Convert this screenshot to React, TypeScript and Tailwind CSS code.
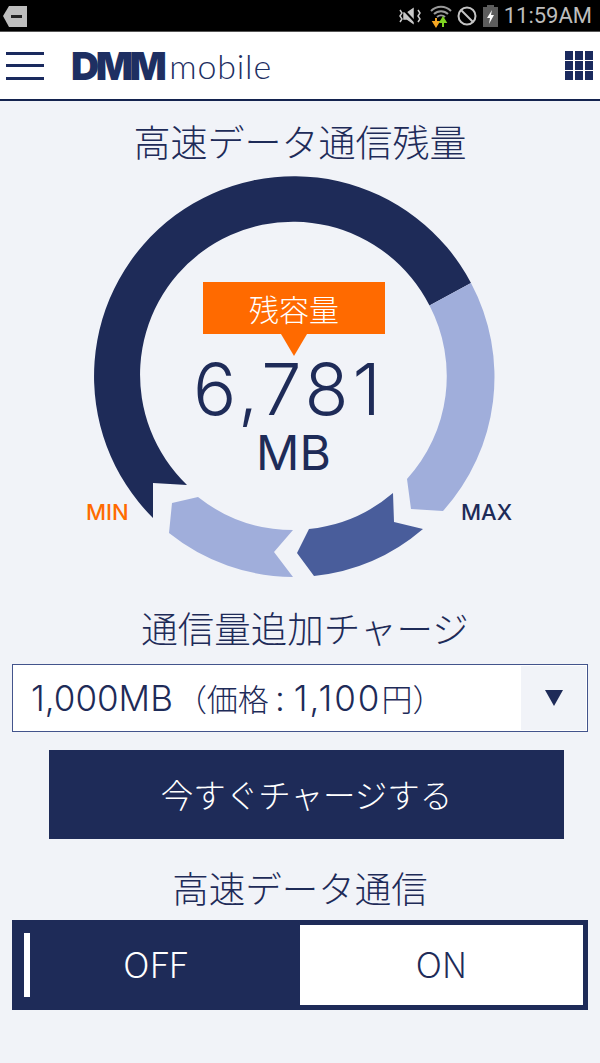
import React, { useState } from "react";

const jp = "font-['Noto_Sans_CJK_JP','Noto_Sans',sans-serif]";
const latin = "font-['Inter','Noto_Sans_CJK_JP',sans-serif]";

const StatusBar = () => (
  <div className="flex h-[32px] items-center justify-between border-b border-[#555] bg-black pl-[2px] pr-[8px]">
    <svg width="25" height="22" viewBox="0 0 25 22">
      <path d="M7 1H25V22H7L1 11Z" fill="#bdbdbd" />
      <rect x="9" y="10" width="11" height="3" fill="#222" />
    </svg>
    <div className="flex items-center">
      <svg width="24" height="18" viewBox="0 0 24 18" className="mr-[9px]" fill="none" stroke="#c9c9c9" strokeWidth="1.5">
        <path d="M7 6h3l6-4v14l-6-4H7z" fill="#c9c9c9" />
        <path d="M3 3l2 3-2 3 2 3-2 3M21 3l2 3-2 3 2 3-2 3" />
        <path d="M5 1l15 16" stroke="#000" strokeWidth="2" />
      </svg>
      <svg width="22" height="24" viewBox="0 0 22 24" className="mr-[5px]" fill="none">
        <path d="M1 7a14 14 0 0 1 20 0M4 10a10 10 0 0 1 14 0M7 13a6 6 0 0 1 8 0" stroke="#9a9a9a" strokeWidth="2" />
        <path d="M6 14v6M3.5 18l2.5 4 2.5-4z" stroke="#f5a623" strokeWidth="2" fill="#f5a623" />
        <path d="M13 23v-6M10.500 18l2.500-4 2.500 4z" stroke="#7ed321" strokeWidth="2" fill="#7ed321" />
      </svg>
      <svg width="20" height="20" viewBox="0 0 20 20" className="mr-[6px]" fill="none" stroke="#c4c4c4" strokeWidth="2">
        <circle cx="10" cy="10" r="8.500" />
        <path d="M4 4l12 12" />
      </svg>
      <svg width="15" height="22" viewBox="0 0 15 22" className="mr-[6px]">
        <path d="M4 0h7v2h4v20H0V2h4z" fill="#5c5c5c" />
        <path d="M9 5L4 13h3l-1 6 5-9H8z" fill="#fff" />
      </svg>
      <span className="font-['Roboto',sans-serif] text-[22px] leading-none text-[#bdbdbd]">11:59AM</span>
    </div>
  </div>
);

const Header = () => (
  <div className="flex h-[69px] items-center justify-between border-b-2 border-[#14234f] bg-white pl-[6px] pr-[7px]">
    <div className="flex items-center">
      <div className="flex h-[28px] w-[38px] flex-col justify-between">
        <div className="h-[3px] bg-[#1a2a5e]" />
        <div className="h-[3px] bg-[#1a2a5e]" />
        <div className="h-[3px] bg-[#1a2a5e]" />
      </div>
      <span className="ml-[27px] font-['Inter',sans-serif] text-[39px] leading-none font-black tracking-[-3.5px] text-[#1e2f62]">
        DMM
      </span>
      <span className="ml-[6px] pt-[1px] font-['Lato',sans-serif] text-[34px] leading-none font-light tracking-[0.8px] text-[#1e2f62]">
        mobile
      </span>
    </div>
    <div className="grid grid-cols-3 gap-[1.5px]">
      {Array.from({ length: 9 }).map((_, i) => (
        <div key={i} className="h-[8.500px] w-[8.500px] bg-[#1a2a5e]" />
      ))}
    </div>
  </div>
);

const Gauge = () => (
  <div className="relative mx-auto h-[420px] w-[600px]">
    <svg width="600" height="420" viewBox="0 165 600 420">
      <path
        d="M153 518 L153 483 L187 485 A153 153 0 1 1 429.500 305.500 L471 283 A200 200 0 1 0 153 518 Z"
        fill="#1e2b58"
      />
      <path
        d="M471 283 A200 200 0 0 1 443 511 L411 509 L407 479 A153 153 0 0 0 429.500 305.500 Z"
        fill="#a0aedb"
      />
      <path
        d="M393 493 L394 522 L423 529 A200 200 0 0 1 314 576 L297 553 L309 529 A153 153 0 0 0 393 493 Z"
        fill="#495d9b"
      />
      <path
        d="M198 497 L172 503 L169 533 A200 200 0 0 0 293 577 L274 552 L293 530 A153 153 0 0 1 198 497 Z"
        fill="#a0aedb"
      />
    </svg>
    <div className="absolute top-[117px] left-[203px] flex h-[52px] w-[182px] items-center justify-center bg-[#ff6a00]">
      <span className={`${jp} text-[30px] leading-none font-light text-white`}>残容量</span>
      <div className="absolute top-[52px] left-[78px] h-0 w-0 border-x-[13px] border-t-[22px] border-x-transparent border-t-[#ff6a00]" />
    </div>
    <div className="absolute top-[187px] left-0 w-[578px] text-center font-['Inter',sans-serif] text-[72px] leading-[74px] font-light tracking-[4px] text-[#1e2b58]">
      6,781
    </div>
    <div className="absolute top-[263px] left-0 w-[587px] text-center font-['Inter',sans-serif] text-[48px] leading-[50px] font-normal text-[#1e2b58]">
      MB
    </div>
    <span className="absolute top-[334px] left-[86px] font-['Inter',sans-serif] text-[22px] leading-[26px] font-medium text-[#ff6a00]">
      MIN
    </span>
    <span className="absolute top-[334px] left-[461px] font-['Inter',sans-serif] text-[22px] leading-[26px] font-medium text-[#1e2b58]">
      MAX
    </span>
  </div>
);

const App = () => {
  const [on, setOn] = useState(false);

  return (
    <div className="h-[1063px] w-[600px] overflow-hidden bg-[#f1f3f8]">
      <StatusBar />
      <Header />
      <h1 className={`${jp} mt-[18px] h-[46px] text-center text-[37px] leading-[44px] font-light text-[#1e2b58]`}>
        高速データ通信残量
      </h1>
      <Gauge />
      <h2 className={`${jp} mt-[21px] h-[44px] pl-[10px] text-center text-[36.500px] leading-[44px] font-light text-[#1e2b58]`}>
        通信量追加チャージ
      </h2>
      <div className="mx-[12px] mt-[14px] flex h-[68px] items-stretch border border-[#43548c] bg-white p-[1px]">
        <div className={`${latin} flex flex-1 items-center pl-[17px] text-[35px] font-light whitespace-nowrap text-[#1e2b58]`}>
          1,000MB
          <span className={`${jp} ml-[3px] text-[31px]`}>（価格</span>
          <span className="mr-[9px] ml-[6px]">:</span>
          <span className="tracking-[2px]">1,100</span>
          <span className={`${jp} text-[31px]`}>円）</span>
        </div>
        <div className="flex w-[65px] items-center justify-center bg-[#f1f3f8]">
          <div className="h-0 w-0 border-x-[9px] border-t-[16px] border-x-transparent border-t-[#1e2b58]" />
        </div>
      </div>
      <button
        type="button"
        className={`${jp} mx-[49px] mt-[18px] block h-[89px] w-[515px] bg-[#1e2b58] text-[32.500px] font-light text-white`}
      >
        今すぐチャージする
      </button>
      <h2 className={`${jp} mt-[27px] h-[44px] text-center text-[36.500px] leading-[44px] font-light text-[#1e2b58]`}>
        高速データ通信
      </h2>
      <div
        className="mx-[12px] mt-[10px] flex h-[90px] border border-[#1e2b58] bg-[#1e2b58] py-[4px] pr-[4px]"
        onClick={() => setOn(!on)}
      >
        <div className="relative flex w-[287px] items-center justify-center">
          <div className="absolute top-[8px] left-[11px] h-[64px] w-[6px] bg-white" />
          <span className={`${jp} pb-[6px] pr-[2px] text-[36px] font-light text-white`}>OFF</span>
        </div>
        <div className={`${jp} flex flex-1 items-center justify-center bg-white pb-[6px] text-[36px] font-light text-[#1e2b58]`}>
          ON
        </div>
      </div>
    </div>
  );
};

export default App;
